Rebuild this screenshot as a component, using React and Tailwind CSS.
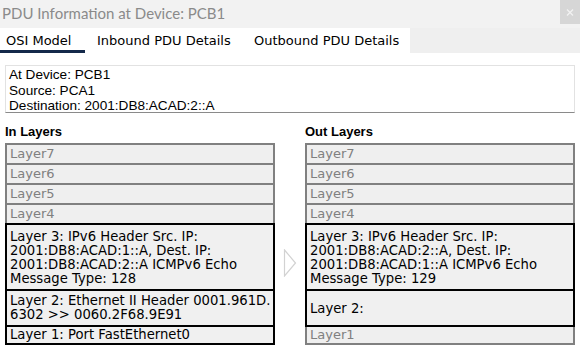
const SANS = { fontFamily: '"DejaVu Sans", Verdana, sans-serif' }

function Gray({ label, first }) {
  return (
    <div
      className={`h-[22px] border-2 border-[#808080] bg-[#efefef] px-[3px] text-[13px] leading-[18px] text-[#808080] ${first ? '' : '-mt-[2px]'}`}
      style={SANS}
    >
      {label}
    </div>
  )
}

function Active({ lines, h, pt }) {
  return (
    <div
      className="relative z-10 -mt-[2px] border-2 border-black bg-[#f0f0f0] px-[3px] text-[13.2px] leading-[14px] text-black whitespace-nowrap"
      style={{ ...SANS, height: h, paddingTop: pt }}
    >
      {lines.map((l, i) => (
        <div key={i}>{l}</div>
      ))}
    </div>
  )
}

function Column({ title, children }) {
  return (
    <div className="w-[270px]">
      <div className="h-[19px] text-[13px] font-bold leading-[15px] text-black" style={{ fontFamily: '"Liberation Sans", Arial, sans-serif' }}>
        {title}
      </div>
      <div className="flex flex-col">{children}</div>
    </div>
  )
}

export default function App() {
  return (
    <div className="w-[580px] h-[350px] overflow-hidden bg-white">
      {/* Title bar */}
      <div className="flex h-[28px] justify-between bg-[#f2f2f2]">
        <div className="pl-[2px] pt-[2px] text-[15px] text-[#8a8a8a]" style={{ fontFamily: 'Lato, "Liberation Sans", sans-serif' }}>
          PDU Information at Device: PCB1
        </div>
        <div className="flex h-[24px] w-[20px] items-center justify-center bg-[#d6d6d6]">
          <svg width="8" height="7" viewBox="0 0 8 7">
            <path d="M1 0.5 L7 6.5 M7 0.5 L1 6.5" stroke="#f2f2f2" strokeWidth="1.3" />
          </svg>
        </div>
      </div>

      {/* Tabs */}
      <div className="flex h-[25px] bg-[#efefef] text-[13px] text-black" style={SANS}>
        <div className="relative w-[85px] bg-white pl-[6px] pt-[5px] leading-[16px]">
          OSI Model
          <div className="absolute bottom-0 left-0 h-[3px] w-[85px] bg-[#14294a]" />
        </div>
        <div className="w-[157px] bg-white pl-[12px] pt-[5px] leading-[16px] whitespace-nowrap">Inbound PDU Details</div>
        <div className="w-[168px] bg-white pl-[12px] pt-[5px] leading-[16px] whitespace-nowrap">Outbound PDU Details</div>
      </div>

      {/* Info box */}
      <div
        className="mx-[5px] mt-[12px] h-[48px] border border-[#e2e2e2] border-b-[#8a8a8a] pl-[3px] pt-[1px] text-[13.6px] leading-[15.5px] text-black"
        style={{ fontFamily: '"Liberation Sans", Arial, sans-serif' }}
      >
        <div>At Device: PCB1</div>
        <div>Source: PCA1</div>
        <div>Destination: 2001:DB8:ACAD:2::A</div>
      </div>

      {/* Layers */}
      <div className="mt-[11px] flex px-[5px]">
        <Column title="In Layers">
          <Gray label="Layer7" first />
          <Gray label="Layer6" />
          <Gray label="Layer5" />
          <Gray label="Layer4" />
          <Active
            h={68}
            pt={5}
            lines={['Layer 3: IPv6 Header Src. IP:', '2001:DB8:ACAD:1::A, Dest. IP:', '2001:DB8:ACAD:2::A ICMPv6 Echo', 'Message Type: 128']}
          />
          <Active h={38} pt={3} lines={['Layer 2: Ethernet II Header 0001.961D.', '6302 >> 0060.2F68.9E91']} />
          <Active h={20} pt={1} lines={['Layer 1: Port FastEthernet0']} />
        </Column>

        <div className="flex w-[30px] justify-center pt-[125px]">
          <svg width="14" height="28" viewBox="0 0 14 28">
            <path d="M1.5 1 L12.5 14 L1.5 27 Z" fill="white" stroke="#d2d2d2" strokeWidth="1.2" />
          </svg>
        </div>

        <Column title="Out Layers">
          <Gray label="Layer7" first />
          <Gray label="Layer6" />
          <Gray label="Layer5" />
          <Gray label="Layer4" />
          <Active
            h={68}
            pt={5}
            lines={['Layer 3: IPv6 Header Src. IP:', '2001:DB8:ACAD:2::A, Dest. IP:', '2001:DB8:ACAD:1::A ICMPv6 Echo', 'Message Type: 129']}
          />
          <Active h={38} pt={11} lines={['Layer 2:']} />
          <div
            className="-mt-[2px] h-[20px] border-2 border-[#808080] bg-[#efefef] px-[3px] text-[13px] leading-[16px] text-[#808080]"
            style={SANS}
          >
            Layer1
          </div>
        </Column>
      </div>
    </div>
  )
}
